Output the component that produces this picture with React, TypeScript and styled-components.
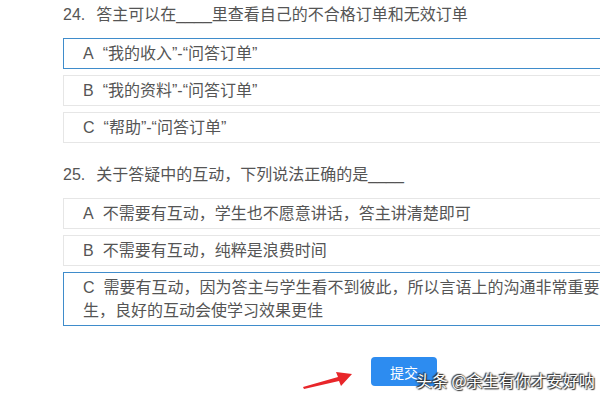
import React from "react";
import styled, { createGlobalStyle } from "styled-components";

const Global = createGlobalStyle`
  html, body { margin: 0; padding: 0; background: #fff; overflow: hidden; }
  body { width: 600px; height: 400px; font-family: "Liberation Sans", "Noto Sans CJK SC", sans-serif; }
`;

const Page = styled.div`
  position: relative;
  width: 600px;
  height: 400px;
  overflow: hidden;
  padding: 3px 0 0 63px;
  box-sizing: border-box;
  display: flex;
  flex-direction: column;
  gap: 20px;
`;

const Question = styled.section`
  display: flex;
  flex-direction: column;
`;

const Title = styled.div`
  font-size: 16px;
  line-height: 24px;
  color: #555;
  white-space: nowrap;
  margin-bottom: 11px;
`;

const Num = styled.span`
  margin-right: 11px;
`;

const Options = styled.div`
  display: flex;
  flex-direction: column;
  gap: 6px;
  width: 580px;
`;

const Option = styled.div<{ $selected?: boolean }>`
  border: 1px solid ${(p) => (p.$selected ? "#3f8ccb" : "#e6e6e6")};
  padding: 3px 19px;
  font-size: 16px;
  line-height: 23px;
  color: #555;
`;

const Line = styled.div`
  white-space: nowrap;
`;

const Letter = styled.span`
  margin-right: 9px;
`;

const Footer = styled.div`
  display: flex;
  padding: 11px 0 0 308px;
`;

const Submit = styled.button`
  width: 66px;
  height: 29px;
  border: none;
  border-radius: 4px;
  background: #2d8cf0;
  color: #fff;
  font-family: "Noto Sans CJK SC", sans-serif;
  font-size: 14px;
  padding: 0;
`;

const Arrow = styled.svg`
  position: absolute;
  left: 300px;
  top: 368px;
`;

const Watermark = styled.div`
  position: absolute;
  left: 416px;
  top: 369px;
  font-family: "Noto Sans CJK SC", sans-serif;
  font-size: 16px;
  line-height: 22px;
  color: #fff;
  white-space: nowrap;
  text-shadow: 0 0 2px #222, 1px 1px 1px #333, -1px -1px 1px #333;
`;

type Q = {
  num: string;
  title: string;
  options: { letter: string; lines: string[]; selected?: boolean }[];
};

const questions: Q[] = [
  {
    num: "24.",
    title: "答主可以在____里查看自己的不合格订单和无效订单",
    options: [
      { letter: "A", lines: ["“我的收入”-“问答订单”"], selected: true },
      { letter: "B", lines: ["“我的资料”-“问答订单”"] },
      { letter: "C", lines: ["“帮助”-“问答订单”"] },
    ],
  },
  {
    num: "25.",
    title: "关于答疑中的互动，下列说法正确的是____",
    options: [
      { letter: "A", lines: ["不需要有互动，学生也不愿意讲话，答主讲清楚即可"] },
      { letter: "B", lines: ["不需要有互动，纯粹是浪费时间"] },
      {
        letter: "C",
        lines: [
          "需要有互动，因为答主与学生看不到彼此，所以言语上的沟通非常重要",
          "生，良好的互动会使学习效果更佳",
        ],
        selected: true,
      },
    ],
  },
];

export default function App() {
  return (
    <>
      <Global />
      <Page>
        {questions.map((q) => (
          <Question key={q.num}>
            <Title>
              <Num>{q.num}</Num>
              {q.title}
            </Title>
            <Options>
              {q.options.map((o) => (
                <Option key={o.letter} $selected={o.selected}>
                  {o.lines.map((l, i) => (
                    <Line key={i}>
                      {i === 0 && <Letter>{o.letter}</Letter>}
                      {l}
                    </Line>
                  ))}
                </Option>
              ))}
            </Options>
          </Question>
        ))}
        <Footer>
          <Submit>提交</Submit>
        </Footer>
        <Arrow width="56" height="22" viewBox="0 0 56 22">
          <path d="M3 19 L38 9 L36 4 L52 6 L41 18 L39 13 L4 21 Z" fill="#e8262a" />
        </Arrow>
        <Watermark>头条 @余生有你才安好呐</Watermark>
      </Page>
    </>
  );
}
